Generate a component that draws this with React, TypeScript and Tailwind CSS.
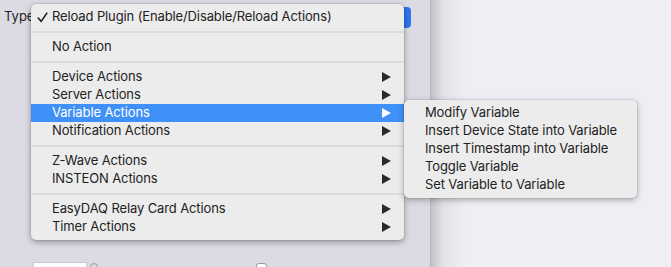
import React from 'react';

type Item = { label: string; sub?: boolean; checked?: boolean; active?: boolean };

const groups: Item[][] = [
  [{ label: 'Reload Plugin (Enable/Disable/Reload Actions)', checked: true }],
  [{ label: 'No Action' }],
  [
    { label: 'Device Actions', sub: true },
    { label: 'Server Actions', sub: true },
    { label: 'Variable Actions', sub: true, active: true },
    { label: 'Notification Actions', sub: true },
  ],
  [
    { label: 'Z-Wave Actions', sub: true },
    { label: 'INSTEON Actions', sub: true },
  ],
  [
    { label: 'EasyDAQ Relay Card Actions', sub: true },
    { label: 'Timer Actions', sub: true },
  ],
];

const variableItems = [
  'Modify Variable',
  'Insert Device State into Variable',
  'Insert Timestamp into Variable',
  'Toggle Variable',
  'Set Variable to Variable',
];

// Submenu arrow
const Arrow = ({ white }: { white?: boolean }) => (
  <svg width="9" height="10" viewBox="0 0 9 10" className="shrink-0">
    <path d="M0 0 L9 5 L0 10 Z" fill={white ? '#ffffff' : '#2a2a2a'} />
  </svg>
);

const Check = () => (
  <svg width="11" height="11" viewBox="0 0 11 11">
    <path d="M1.2 6 L4.2 9.4 L9.8 1.2" fill="none" stroke="#222" strokeWidth="1.6" strokeLinecap="round" strokeLinejoin="round" />
  </svg>
);

const MenuRow = ({ item }: { item: Item }) => (
  <div
    className={`flex items-center h-[18px] pr-[13px] ${
      item.active ? 'bg-[#3f91f7] text-white' : 'text-[#222222]'
    }`}
  >
    <span className="w-[21px] pl-[6px] flex items-center">{item.checked && <Check />}</span>
    <span className="flex-1 whitespace-nowrap tracking-[-0.12px]">{item.label}</span>
    {item.sub && <Arrow white={item.active} />}
  </div>
);

export default function App() {
  return (
    <div
      className="relative flex w-[671px] h-[267px] overflow-hidden text-[13px]"
      style={{ fontFamily: 'Inter, "Liberation Sans", sans-serif' }}
    >
      {/* Left sheet */}
      <div className="w-[431px] h-full bg-[#dcdbe3] border-r border-[#b9b8bf] relative">
        <div className="flex items-center h-[22px] mt-[6px] pl-[4px] text-[#1f1f1f]">
          <span>Type</span>
          <div className="ml-auto mr-[19px] w-[10px] h-[21px] rounded-r-[4px] bg-[#2f74ef]" />
        </div>
        {/* bottom controls peeking */}
        <div className="absolute left-[33px] top-[262px] flex items-center gap-[3px]">
          <div className="w-[54px] h-[10px] bg-white border border-[#c8c8cc]" />
          <div className="w-[8px] h-[8px] rounded-full border border-[#9a9aa0]" />
        </div>
        <div className="absolute left-[256px] top-[263px] w-[11px] h-[10px] rounded-[3px] border border-[#9a9aa0] bg-white" />
      </div>

      {/* Right area */}
      <div className="flex-1 h-full bg-[linear-gradient(to_right,#c3c2c9_0px,#e2e1e8_12px,#efeef5_34px)]" />

      {/* Main popup menu */}
      <div className="absolute left-[31px] top-[4px] w-[373px] py-[4px] rounded-[5px] bg-[#ececec] shadow-[0_2px_6px_rgba(0,0,0,0.35),0_0_0_1px_rgba(0,0,0,0.06)]">
        {groups.map((g, gi) => (
          <div key={gi}>
            {gi > 0 && <div className="my-[5px] h-[2px] bg-[#dcdcdc]" />}
            {g.map((it) => (
              <MenuRow key={it.label} item={it} />
            ))}
          </div>
        ))}
      </div>

      {/* Submenu */}
      <div className="absolute left-[404px] top-[100px] w-[233px] py-[4px] rounded-[5px] bg-[#ececec] shadow-[0_2px_6px_rgba(0,0,0,0.3),0_0_0_1px_rgba(0,0,0,0.06)]">
        {variableItems.map((t) => (
          <div key={t} className="h-[18px] flex items-center pl-[21px] text-[#222222] whitespace-nowrap tracking-[-0.12px]">
            {t}
          </div>
        ))}
      </div>
    </div>
  );
}
